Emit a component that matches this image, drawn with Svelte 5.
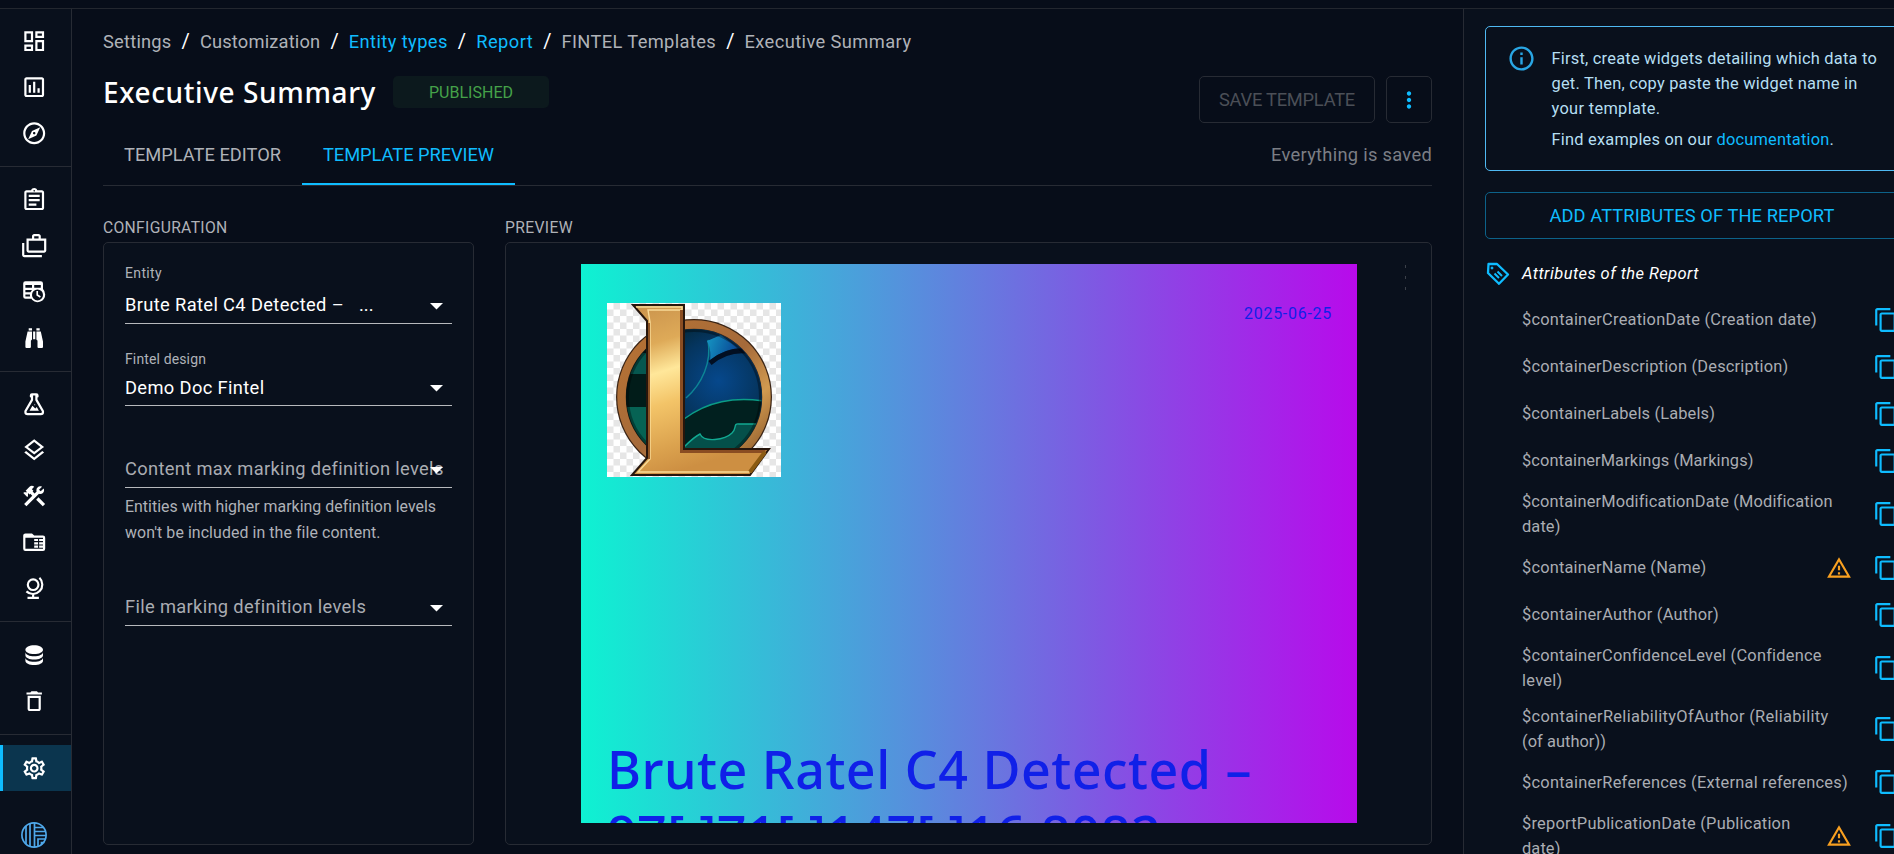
<script>
  // Spreads letter spacing so that a label takes the given width.
  function fit(node, width) {
    const natural = node.getBoundingClientRect().width;
    const n = [...node.textContent].length;
    node.style.letterSpacing = `${(width - natural) / n}px`;
  }

  const icons = {
    dashboard: 'M19 5v2h-4V5zM9 5v6H5V5zm10 8v6h-4v-6zM9 17v2H5v-2zM21 3h-8v6h8zM11 3H3v10h8zm10 8h-8v10h8zm-10 4H3v6h8z',
    chart: 'M9 17H7v-7h2zm4 0h-2V7h2zm4 0h-2v-4h2zm2 2H5V5h14zm0-16H5c-1.1 0-2 .9-2 2v14c0 1.1.9 2 2 2h14c1.1 0 2-.9 2-2V5c0-1.1-.9-2-2-2',
    explore: 'M12 2C6.48 2 2 6.48 2 12s4.48 10 10 10 10-4.48 10-10S17.52 2 12 2zm0 18c-4.41 0-8-3.59-8-8s3.59-8 8-8 8 3.59 8 8-3.59 8-8 8zm-5.5-2.5l7.51-3.49L17.5 6.5 9.99 9.99 6.5 17.5zm5.5-6.6c.61 0 1.1.49 1.1 1.1s-.49 1.1-1.1 1.1-1.1-.49-1.1-1.1.49-1.1 1.1-1.1z',
    assignment: 'M7 15h7v2H7zm0-4h10v2H7zm0-4h10v2H7zm12-4h-4.18C14.4 1.84 13.3 1 12 1s-2.4.84-2.82 2H5c-1.1 0-2 .9-2 2v14c0 1.1.9 2 2 2h14c1.1 0 2-.9 2-2V5c0-1.1-.9-2-2-2zm-7-.25c.41 0 .75.34.75.75s-.34.75-.75.75-.75-.34-.75-.75.34-.75.75-.75zM19 19H5V5h14z',
    cases: 'M3 9H1v11c0 1.11.89 2 2 2h16v-2H3zM18 5V3c0-1.1-.9-2-2-2h-4c-1.1 0-2 .9-2 2v2H5v11c0 1.11.89 2 2 2h14c1.11 0 2-.89 2-2V5zm-6-2h4v2h-4zm9 13H7V7h14z',
    tableClock: 'M4 2h14a2 2 0 0 1 2 2v5.1a7 7 0 0 1 2 4.9 7 7 0 0 1-12 4.9A7 7 0 0 1 9.7 18H4a2 2 0 0 1-2-2V4a2 2 0 0 1 2-2zm0 3.500v2.500h6V5.500zm8 0v2.500h6V5.500zM4 10v2h4.600l1.400-2zm0 4v2h4.300a7 7 0 0 1-.2-2zm11-4.500a5 5 0 1 0 0 10 5 5 0 0 0 0-10zM14 11h1.500v3.200l2.500 1.450-.75 1.300L14 15z',
    binoculars: 'M11,6H13V13H11V6M9,20A1,1 0 0,1 8,21H5A1,1 0 0,1 4,20V15L6,6H10V13A1,1 0 0,1 9,14V20M10,5H7V3H10V5M15,20V14A1,1 0 0,1 14,13V6H18L20,15V20A1,1 0 0,1 19,21H16A1,1 0 0,1 15,20M14,5V3H17V5H14Z',
    flask: 'M5,19A1,1 0 0,0 6,20H18A1,1 0 0,0 19,19C19,18.79 18.93,18.59 18.82,18.43L13,8.35V4H11V8.35L5.18,18.43C5.07,18.59 5,18.79 5,19M6,22A3,3 0 0,1 3,19C3,18.4 3.18,17.84 3.5,17.37L9,7.81V6A1,1 0 0,1 8,5V4A2,2 0 0,1 10,2H14A2,2 0 0,1 16,4V5A1,1 0 0,1 15,6V7.81L20.5,17.37C20.82,17.84 21,18.4 21,19A3,3 0 0,1 18,22H6M13,16L14.34,14.66L16.27,18H7.73L10.39,13.39L13,16M12.5,12A.5,.5 0 0,1 12.500,13A.5,.5 0 0,1 12.500,12Z',
    layers: 'M11.99 18.54l-7.37-5.73L3 14.07l9 7 9-7-1.63-1.27zM12 16l7.36-5.73L21 9l-9-7-9 7 1.63 1.27zm0-11.47L17.74 9 12 13.47 6.26 9z',
    tools: 'M13.78 15.17l2.12-2.12 6 6-2.12 2.12zM17.5 10c1.93 0 3.5-1.57 3.5-3.5 0-.58-.16-1.12-.41-1.6l-2.7 2.7-1.49-1.49 2.7-2.7c-.48-.25-1.02-.41-1.6-.41C15.57 3 14 4.57 14 6.5c0 .41.08.8.21 1.16l-1.85 1.85-1.78-1.78.71-.71-1.41-1.41L12 3.49c-1.17-1.17-3.07-1.17-4.24 0L4.22 7.03l1.41 1.41H2.81l-.71.71 3.54 3.54.71-.71V9.15l1.41 1.41.71-.71 1.78 1.78-7.41 7.41 2.12 2.12L16.34 9.79c.36.13.75.21 1.16.21',
    folder: 'M4 4a2 2 0 0 0-2 2v12a2 2 0 0 0 2 2h16a2 2 0 0 0 2-2V8a2 2 0 0 0-2-2h-8l-2-2zm0 4h16v10H4zM12 9h3.500v2H12zm4.500 0H20v2h-3.500zM12 12h3.500v2H12zm4.500 0H20v2h-3.500zM12 15h3.500v2H12zm4.500 0H20v2h-3.500z',
    database: 'M12,3C7.58,3 4,4.79 4,7C4,9.21 7.58,11 12,11C16.42,11 20,9.21 20,7C20,4.79 16.42,3 12,3M4,9V12C4,14.21 7.58,16 12,16C16.42,16 20,14.21 20,12V9C20,11.21 16.42,13 12,13C7.58,13 4,11.21 4,9M4,14V17C4,19.21 7.58,21 12,21C16.42,21 20,19.21 20,17V14C20,16.21 16.42,18 12,18C7.58,18 4,16.21 4,14Z',
    trash: 'M6 19c0 1.1.9 2 2 2h8c1.1 0 2-.9 2-2V7H6zM8 9h8v10H8zm7.5-5-1-1h-5l-1 1H5v2h14V4z',
    settings: 'M19.43 12.98c.04-.32.07-.64.07-.98 0-.34-.03-.66-.07-.98l2.11-1.65c.19-.15.24-.42.12-.64l-2-3.46c-.09-.16-.26-.25-.44-.25-.06 0-.12.01-.17.03l-2.49 1c-.52-.4-1.08-.73-1.69-.98l-.38-2.65C14.46 2.18 14.25 2 14 2h-4c-.25 0-.46.18-.49.42l-.38 2.65c-.61.25-1.17.59-1.69.98l-2.49-1c-.06-.02-.12-.03-.18-.03-.17 0-.34.09-.43.25l-2 3.46c-.13.22-.07.49.12.64l2.11 1.65c-.04.32-.07.65-.07.98 0 .33.03.66.07.98l-2.11 1.65c-.19.15-.24.42-.12.64l2 3.46c.09.16.26.25.44.25.06 0 .12-.01.17-.03l2.49-1c.52.4 1.08.73 1.69.98l.38 2.65c.03.24.24.42.49.42h4c.25 0 .46-.18.49-.42l.38-2.65c.61-.25 1.17-.59 1.69-.98l2.49 1c.06.02.12.03.18.03.17 0 .34-.09.43-.25l2-3.46c.12-.22.07-.49-.12-.64l-2.11-1.65zm-1.98-1.71c.04.31.05.52.05.73 0 .21-.02.43-.05.73l-.14 1.13.89.7 1.08.84-.7 1.21-1.27-.51-1.04-.42-.9.68c-.43.32-.84.56-1.25.73l-1.06.43-.16 1.13-.2 1.35h-1.4l-.19-1.35-.16-1.13-1.06-.43c-.43-.18-.83-.41-1.23-.71l-.91-.7-1.06.43-1.27.51-.7-1.21 1.08-.84.89-.7-.14-1.13c-.03-.31-.05-.54-.05-.74s.02-.43.05-.73l.14-1.13-.89-.7-1.08-.84.7-1.21 1.27.51 1.04.42.9-.68c.43-.32.84-.56 1.25-.73l1.06-.43.16-1.13.2-1.35h1.39l.19 1.35.16 1.13 1.06.43c.43.18.83.41 1.23.71l.91.7 1.06-.43 1.27-.51.7 1.21-1.07.85-.89.7.14 1.13zM12 8c-2.21 0-4 1.79-4 4s1.79 4 4 4 4-1.79 4-4-1.79-4-4-4zm0 6c-1.1 0-2-.9-2-2s.9-2 2-2 2 .9 2 2-.9 2-2 2z',
    copy: 'M16 1H4c-1.1 0-2 .9-2 2v14h2V3h12zm3 4H8c-1.1 0-2 .9-2 2v14c0 1.1.9 2 2 2h11c1.1 0 2-.9 2-2V7c0-1.1-.9-2-2-2m0 16H8V7h11z',
    warning: 'M12 5.99 19.53 19H4.47zM12 2 1 21h22zm1 14h-2v2h2zm0-6h-2v4h2z',
    info: 'M11 7h2v2h-2zm0 4h2v6h-2zm1-9C6.480 2 2 6.480 2 12s4.480 10 10 10 10-4.480 10-10S17.520 2 12 2m0 18c-4.410 0-8-3.590-8-8s3.590-8 8-8 8 3.590 8 8-3.590 8-8 8',
    more: 'M12 8c1.1 0 2-.9 2-2s-.9-2-2-2-2 .9-2 2 .9 2 2 2m0 2c-1.1 0-2 .9-2 2s.9 2 2 2 2-.9 2-2-.9-2-2-2m0 6c-1.1 0-2 .9-2 2s.9 2 2 2 2-.9 2-2-.9-2-2-2'
  };

  const nav = [
    ['dashboard', 'chart', 'explore'],
    ['assignment', 'cases', 'tableClock', 'binoculars'],
    ['flask', 'layers', 'tools', 'folder', 'globe'],
    ['database', 'trash'],
    ['settings']
  ];

  const crumbs = [
    { t: 'Settings', w: 68.5 },
    { t: 'Customization', w: 120.5 },
    { t: 'Entity types', w: 99, link: true },
    { t: 'Report', w: 57, link: true },
    { t: 'FINTEL Templates', w: 154.5 },
    { t: 'Executive Summary', w: 167 }
  ];

  const attributes = [
    { lines: [['$containerCreationDate (Creation date)', 295]] },
    { lines: [['$containerDescription (Description)', 266.500]] },
    { lines: [['$containerLabels (Labels)', 193]] },
    { lines: [['$containerMarkings (Markings)', 231.500]] },
    { lines: [['$containerModificationDate (Modification', 309.500], ['date)', 38.500]] },
    { lines: [['$containerName (Name)', 184.500]], warn: true },
    { lines: [['$containerAuthor (Author)', 197]] },
    { lines: [['$containerConfidenceLevel (Confidence', 298.500], ['level)', 40.500]] },
    { lines: [['$containerReliabilityOfAuthor (Reliability', 306.500], ['(of author))', 84]] },
    { lines: [['$containerReferences (External references)', 326]] },
    { lines: [['$reportPublicationDate (Publication', 268.500], ['date)', 38.500]], warn: true }
  ];
</script>

{#snippet icon(name, size)}
  <svg width={size} height={size} viewBox="0 0 24 24" fill="currentColor" fill-rule="evenodd"><path d={icons[name]} /></svg>
{/snippet}

{#snippet caret()}
  <svg class="caret" width="13" height="7" viewBox="0 0 13 7"><path d="M0 0h13L6.500 6.500z" fill="#fff" /></svg>
{/snippet}

<div class="app">
  <aside class="side">
    {#each nav as group, i}
      {#if i > 0}<hr />{/if}
      {#each group as name}
        <div class="nav-item" class:active={name === 'settings'}>
          {#if name === 'globe'}
            <svg width="26" height="26" viewBox="0 0 24 24" fill="none" stroke="currentColor" stroke-width="2">
              <circle cx="11.200" cy="8" r="4.900" />
              <path d="M17 1.700A8.600 8.600 0 0 1 5 14.200M11.200 16.500V20M6 20.200h10.500" />
            </svg>
          {:else}
            {@render icon(name, 26.400)}
          {/if}
        </div>
      {/each}
    {/each}
    <div class="brand">
      <svg width="26" height="26" viewBox="0 0 26 26" fill="none" stroke="#4fa8ea" stroke-width="1.700">
        <circle cx="13" cy="13" r="12.100" />
        <path d="M5 4v18M9 2v22M13.500 1v24M14 5.500h8.500M14 9.500h11M14 13.500h11M17 25v-8h8M20.500 23v-2.500h3" />
      </svg>
    </div>
  </aside>

  <main>
    <nav class="crumbs">
      {#each crumbs as c, i}
        {#if i > 0}<i>/</i>{/if}
        <span class="slot" style:width="{c.w}px"><span class:link={c.link} use:fit={c.w}>{c.t}</span></span>
      {/each}
    </nav>

    <header>
      <h1><span use:fit={273}>Executive Summary</span></h1>
      <div class="chip"><span use:fit={84}>PUBLISHED</span></div>
      <div class="actions">
        <button class="save"><span use:fit={136}>SAVE TEMPLATE</span></button>
        <button class="more">{@render icon('more', 26)}</button>
      </div>
    </header>

    <div class="tabs">
      <div class="tab"><span use:fit={157}>TEMPLATE EDITOR</span></div>
      <div class="tab on"><span use:fit={171}>TEMPLATE PREVIEW</span></div>
      <div class="saved"><span use:fit={161}>Everything is saved</span></div>
    </div>

    <div class="columns">
      <section class="config">
        <h2><span use:fit={124.500}>CONFIGURATION</span></h2>
        <div class="card fields">
          <div class="label"><span use:fit={37}>Entity</span></div>
          <div class="field entity">
            <span use:fit={219}>Brute Ratel C4 Detected –</span><span class="dots">...</span>
            {@render caret()}
          </div>
          <div class="label second"><span use:fit={81}>Fintel design</span></div>
          <div class="field design"><span use:fit={139.500}>Demo Doc Fintel</span>{@render caret()}</div>
          <div class="field empty"><span use:fit={318}>Content max marking definition levels</span>{@render caret()}</div>
          <p>
            <span use:fit={310.500}>Entities with higher marking definition levels</span><br />
            <span use:fit={255}>won't be included in the file content.</span>
          </p>
          <div class="field empty last"><span use:fit={240.500}>File marking definition levels</span>{@render caret()}</div>
        </div>
      </section>

      <section class="preview">
        <h2><span use:fit={68}>PREVIEW</span></h2>
        <div class="card stage">
          <div class="page">
            <div class="page-top">
              <svg class="logo" width="174" height="174" viewBox="0 0 174 174">
                <defs>
                  <pattern id="check" width="13" height="13" patternUnits="userSpaceOnUse">
                    <rect width="13" height="13" fill="#fff" />
                    <path d="M6.500 0H13v6.500H6.500zM0 6.500h6.500V13H0z" fill="#e6e6e6" />
                  </pattern>
                  <linearGradient id="gold" x1="0" y1="0" x2="0.250" y2="1">
                    <stop offset="0" stop-color="#c9924c" />
                    <stop offset="0.250" stop-color="#deaa58" />
                    <stop offset="0.420" stop-color="#ffe79a" />
                    <stop offset="0.600" stop-color="#f3c468" />
                    <stop offset="0.850" stop-color="#dba24e" />
                    <stop offset="1" stop-color="#cd8f42" />
                  </linearGradient>
                  <linearGradient id="ring" x1="0" y1="0" x2="1" y2="1">
                    <stop offset="0" stop-color="#b87333" />
                    <stop offset="0.500" stop-color="#a56a3a" />
                    <stop offset="0.720" stop-color="#d19a50" />
                    <stop offset="1" stop-color="#7c4a22" />
                  </linearGradient>
                  <radialGradient id="deep" cx="0.680" cy="0.380" r="0.620">
                    <stop offset="0" stop-color="#06488c" />
                    <stop offset="0.500" stop-color="#05355f" />
                    <stop offset="0.850" stop-color="#03242f" />
                    <stop offset="1" stop-color="#01100f" />
                  </radialGradient>
                  <linearGradient id="tip" x1="0" y1="0" x2="1" y2="0.300">
                    <stop offset="0" stop-color="#1597c4" />
                    <stop offset="1" stop-color="#0a4a96" />
                  </linearGradient>
                  <clipPath id="disc"><circle cx="87" cy="94" r="67.500" /></clipPath>
                </defs>
                <rect width="174" height="174" fill="url(#check)" />
                <circle cx="87" cy="94" r="78" fill="#3a2415" />
                <circle cx="87" cy="94" r="72.500" fill="none" stroke="url(#ring)" stroke-width="8.500" />
                <circle cx="87" cy="94" r="68" fill="url(#deep)" />
                <g clip-path="url(#disc)">
                  <path d="M15 50h24v21H15z" fill="#06574f" />
                  <path d="M15 71h24v33H15z" fill="#011c19" />
                  <path d="M15 104h24v45H15z" fill="#066354" />
                  <path d="M77 116c24-18 50-22 80-18v52H77z" fill="#01201f" />
                  <path d="M77 116c24-18 50-22 80-18" fill="none" stroke="#0b9c87" stroke-width="1.500" />
                  <path d="M77 144c7-7 12-11 16-13 4 9 25 6 32-1 5-4 1-10 7-9h25v35H77z" fill="#04504a" />
                  <path d="M77 144c7-7 12-11 16-13 4 9 25 6 32-1 5-4 1-10 7-9h18" fill="none" stroke="#12a891" stroke-width="1.400" />
                  <path d="M101 37c4 22-6 44-22 58" fill="none" stroke="#0d8495" stroke-width="1.500" />
                  <path d="M100 38l14-6 17 13c-13 2-22 7-28 13 1-8 0-14-3-20z" fill="url(#tip)" />
                  <path d="M103 60c11-9 23-13 36-12" fill="none" stroke="#020f22" stroke-width="5" />
                  <circle cx="87" cy="94" r="67" fill="none" stroke="#000" stroke-width="4" opacity="0.350" />
                </g>
                <path d="M26 2h51v144h85l-19 26H25l15-17V18z" fill="url(#gold)" stroke="#27160c" stroke-width="2" />
                <path d="M29 4h46v3H41l2 12v137L31 169h111" fill="none" stroke="#ffe6a4" stroke-width="1.400" opacity="0.850" />
                <path d="M74.500 7v141.500h84" fill="none" stroke="#8a4d22" stroke-width="3" />
                <path d="M42 20v136" stroke="#8c5424" stroke-width="2" />
                <path d="M158 149l-15 20" stroke="#8a5a12" stroke-width="4" />
              </svg>
              <div class="date"><span use:fit={88}>2025-06-25</span></div>
            </div>
            <div class="title">
              <span use:fit={645}>Brute Ratel C4 Detected –</span><br />
              <span use:fit={554}>97[.]71[.]147[.]16:8082</span>
            </div>
          </div>
          <div class="handle"><b></b><b></b><b></b></div>
        </div>
      </section>
    </div>
  </main>

  <aside class="drawer">
    <div class="alert">
      <div class="info">{@render icon('info', 29)}</div>
      <div class="alert-text">
        <div><span use:fit={325.500}>First, create widgets detailing which data to</span></div>
        <div><span use:fit={306}>get. Then, copy paste the widget name in</span></div>
        <div><span use:fit={109}>your template.</span></div>
        <div class="gap"><span use:fit={165}>{'Find examples on our '}</span><span class="link" use:fit={113}>documentation</span>.</div>
      </div>
    </div>
    <button class="add"><span use:fit={285}>ADD ATTRIBUTES OF THE REPORT</span></button>
    <div class="heading">
      <svg width="24" height="24" viewBox="0 0 24 24" fill="none" stroke="#0fbcff" stroke-width="2.300" stroke-linejoin="round">
        <path d="M2.500 2H11L22 12.500 13 21.800 2 11z" />
        <path d="M8.500 11.500l4.500 4.500M11.500 9.500l4.500 4.500" stroke-width="2" />
        <circle cx="6" cy="6" r="1" fill="#0fbcff" stroke-width="1" />
      </svg>
      <em><span use:fit={177}>Attributes of the Report</span></em>
    </div>
    {#each attributes as a}
      <div class="attr" class:double={a.lines.length > 1}>
        <div class="attr-text">
          {#each a.lines as [text, w]}
            <div><span use:fit={w}>{text}</span></div>
          {/each}
        </div>
        {#if a.warn}<div class="warn">{@render icon('warning', 26)}</div>{/if}
        <div class="copy">{@render icon('copy', 26)}</div>
      </div>
    {/each}
  </aside>
</div>

<style>
  :global(body) {
    background: #070d19;
    overflow: hidden;
  }
  .app {
    box-sizing: border-box;
    width: 1894px;
    height: 854px;
    padding-top: 8px;
    display: flex;
    overflow: hidden;
    background: linear-gradient(#23272f, #23272f) 0 8px / 100% 1px no-repeat #070d19;
    font-family: Roboto, 'Noto Sans', sans-serif;
    font-size: 18.3px;
    color: #fff;
  }
  .app span {
    white-space: pre;
  }
  svg {
    display: block;
    flex: none;
  }
  .link {
    color: #0fbcff;
  }
  .side {
    flex: none;
    width: 71px;
    margin-top: 1px;
    padding-top: 9px;
    background: #09101c;
    border-right: 1px solid #272b34;
  }
  .side hr {
    height: 1px;
    border: 0;
    margin: 9.900px 0;
    background: #272b34;
  }
  .nav-item {
    box-sizing: border-box;
    height: 46px;
    padding-left: 21px;
    display: flex;
    align-items: center;
  }
  .nav-item.active {
    padding-left: 18px;
    border-left: 3px solid #0fbcff;
    background: #0b354e;
  }
  .brand {
    padding: 31px 0 0 21px;
  }
  main {
    flex: none;
    box-sizing: border-box;
    width: 1391px;
    padding: 0 31px 0 31px;
  }
  .crumbs {
    height: 66px;
    display: flex;
    align-items: center;
    color: #afb2b8;
  }
  .slot {
    display: block;
    flex: none;
  }
  .crumbs i {
    width: 28.400px;
    text-align: center;
    color: #fff;
    font-style: normal;
    font-size: 20px;
  }
  header {
    display: flex;
    height: 60px;
  }
  h1 {
    margin: 0;
    width: 290px;
    font: 500 28px/36px 'Noto Sans', sans-serif;
  }
  .chip {
    margin-top: 2px;
    width: 156px;
    height: 32px;
    border-radius: 5px;
    background: #0c191d;
    color: #45a249;
    font-size: 16px;
    line-height: 33px;
    text-align: center;
  }
  .actions {
    margin: 2px 0 0 auto;
    display: flex;
    gap: 11px;
  }
  button {
    box-sizing: border-box;
    padding: 0;
    height: 47px;
    border: 1px solid #272b34;
    border-radius: 5px;
    background: none;
    font: 18.300px Roboto, sans-serif;
    color: #4b4f57;
    display: flex;
    align-items: center;
    justify-content: center;
  }
  .save {
    width: 176px;
  }
  .more {
    width: 46px;
    color: #0fbcff;
  }
  .tabs {
    height: 51px;
    border-bottom: 1px solid #272b34;
    display: flex;
    line-height: 42px;
    color: #afb2b8;
  }
  .tab {
    box-sizing: border-box;
    height: 51px;
    width: 199px;
    padding-left: 21px;
  }
  .tab.on {
    width: 213px;
    color: #0fbcff;
    border-bottom: 2px solid #0fbcff;
  }
  .saved {
    margin-left: auto;
    color: #7b7e85;
  }
  .columns {
    display: flex;
    gap: 31px;
    padding-top: 31px;
  }
  .config {
    width: 371px;
  }
  .preview {
    width: 927px;
  }
  h2 {
    margin: 0;
    height: 25px;
    font: 400 15.700px/22px Roboto, sans-serif;
    color: #afb2b8;
  }
  .card {
    box-sizing: border-box;
    height: 603px;
    border: 1px solid #272b34;
    border-radius: 5px;
    background: #09101c;
  }
  .fields {
    padding: 20px 21px 0;
  }
  .label {
    height: 20px;
    line-height: 20px;
    font-size: 14px;
    color: #afb2b8;
  }
  .label.second {
    margin-top: 25px;
  }
  .field {
    box-sizing: border-box;
    display: flex;
    align-items: center;
    height: 41px;
    border-bottom: 1px solid #b7b9bd;
    position: relative;
  }
  .entity {
    padding-top: 2px;
  }
  .design {
    height: 37px;
    padding-top: 1px;
  }
  .dots {
    margin-left: 15px;
  }
  .caret {
    position: absolute;
    right: 9px;
    bottom: 13px;
  }
  .empty {
    margin-top: 45px;
    height: 37px;
    padding-bottom: 1px;
    color: #a9acb2;
  }
  p {
    margin: 6px 0 0;
    font-size: 15.900px;
    line-height: 26px;
    color: #afb2b8;
  }
  .empty.last {
    margin-top: 43px;
  }
  .stage {
    padding: 21px 0 0 75px;
    display: flex;
  }
  .page {
    box-sizing: border-box;
    width: 776px;
    height: 559px;
    overflow: hidden;
    padding: 39px 25px 0 26px;
    background: linear-gradient(90deg, #0ef2d2, #b80aeb);
    color: #1020e8;
  }
  .page-top {
    display: flex;
    justify-content: space-between;
  }
  .date {
    font-size: 16px;
    line-height: 21px;
  }
  .title {
    margin-top: 259px;
    font: 500 52px/65px 'Noto Sans', sans-serif;
  }
  .handle {
    margin: 1px 0 0 48px;
    display: flex;
    flex-direction: column;
    gap: 8px;
  }
  .handle b {
    width: 1px;
    height: 3px;
    background: #3b4049;
  }
  .drawer {
    flex: none;
    box-sizing: border-box;
    width: 431px;
    margin-top: 1px;
    padding: 17px 0 0 21px;
    border-left: 1px solid #272b34;
    background: #09101c;
  }
  .alert {
    box-sizing: border-box;
    width: 460px;
    height: 145px;
    border: 1px solid #4fb9f2;
    border-radius: 5px;
    padding: 19px 0 0 21px;
    display: flex;
    color: #b5dff2;
    font-size: 16.400px;
    line-height: 25px;
  }
  .info {
    width: 44.500px;
    color: #29a6e4;
  }
  .info svg {
    margin: -2px 0 0 0;
  }
  .gap {
    margin-top: 6px;
  }
  .add {
    margin-top: 21px;
    width: 460px;
    padding-right: 46px;
    border-color: #0c6289;
    color: #0fbcff;
  }
  .heading {
    height: 57px;
    margin-top: 6px;
    padding-left: 1px;
    display: flex;
    align-items: center;
    gap: 12px;
    font-size: 16.500px;
  }
  .attr {
    height: 46.900px;
    padding-left: 37px;
    display: flex;
    align-items: center;
    position: relative;
    font-size: 16.400px;
    line-height: 25px;
    color: #aaadb3;
  }
  .attr.double {
    height: 60.300px;
  }
  .heading + .attr {
    margin-top: -5.500px;
  }
  .attr-text {
    flex: none;
    width: 339px;
  }
  .warn {
    position: absolute;
    left: 341px;
    color: #f9a020;
  }
  .copy {
    flex: none;
    margin-left: 12px;
    color: #0fbcff;
  }
</style>
